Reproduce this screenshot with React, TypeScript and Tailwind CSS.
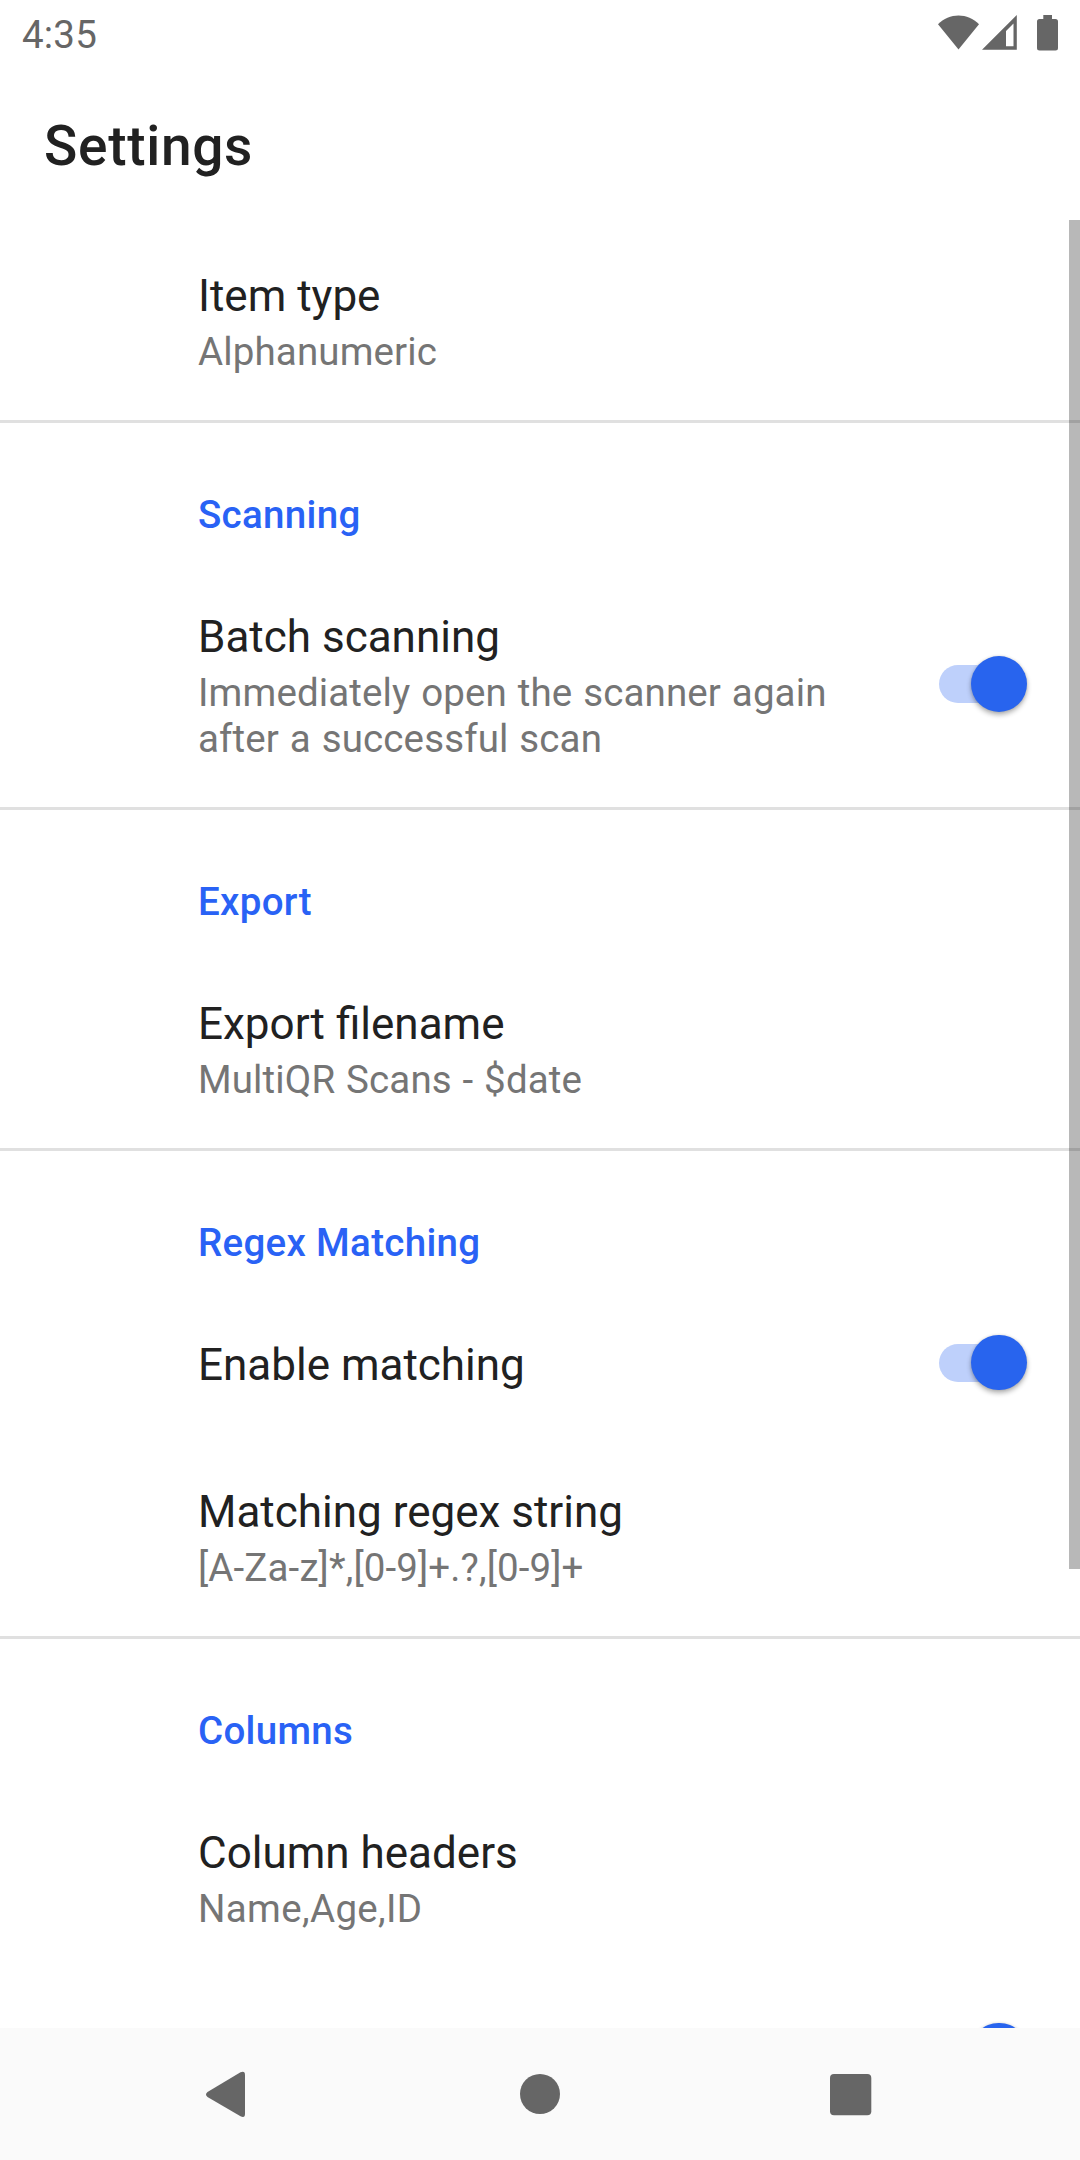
import { ReactNode } from "react";

function Divider() {
  return <div className="h-[3px] shrink-0 bg-[#e0e0e0]" />;
}

function Category({ title }: { title: string }) {
  return (
    <div className="flex h-[138px] shrink-0 items-end pl-[198px] pb-[24px] text-[38.5px] leading-[45px] font-medium tracking-[0.31px] text-[#2962f5]">
      {title}
    </div>
  );
}

function Switch() {
  return (
    <div className="relative mr-[53px] h-[56px] w-[88px] shrink-0">
      <div className="absolute top-[9px] left-0 h-[38px] w-[80px] rounded-full bg-[#bed0fb]" />
      <div className="absolute top-[0.25px] right-[0.25px] size-[55.3px] rounded-full bg-[#2864ee] shadow-[0_3px_5px_rgba(0,0,0,0.3),0_0_3px_rgba(0,0,0,0.12)]" />
    </div>
  );
}

function Preference({ title, summary, height, on }: { title?: string; summary?: ReactNode; height: string; on?: boolean }) {
  return (
    <div className={`flex shrink-0 items-center justify-between pl-[198px] ${height}`}>
      <div className={summary ? "pt-[2px]" : "pt-[5px]"}>
        <div className="text-[44px] leading-[57px] text-[#212121]">{title}</div>
        {summary && (
          <div className="mt-[4px] text-[38.5px] leading-[46px] tracking-[0.13px] text-[#757575] [word-spacing:1.1px]">
            {summary}
          </div>
        )}
      </div>
      {on && <Switch />}
    </div>
  );
}

function StatusIcons() {
  return (
    <svg width="124" height="40" viewBox="936 13 124 40" fill="#666">
      <path d="M938 24.3C949 12.6 968 12.6 979 24.3L958.500 49.500Z" />
      <path fillRule="evenodd" d="M982 49.700L1016.800 15V49.700ZM1006 31V46.300H1013.500V23.500Z" />
      <path d="M1043.300 15H1052V19H1055.500Q1058 19 1058 21.500V48Q1058 50.500 1055.500 50.500H1039.500Q1037 50.500 1037 48V21.500Q1037 19 1039.500 19H1043.300Z" />
    </svg>
  );
}

export default function App() {
  return (
    <div className="relative flex h-[2160px] w-[1080px] flex-col overflow-hidden bg-white font-['Roboto',sans-serif]">
      <header className="flex h-[66px] shrink-0 items-center justify-between pl-[22px] pr-[20px] text-[38.5px] text-[#666]">
        <span className="pt-[3px] tracking-[0.2px]">4:35</span>
        <StatusIcons />
      </header>
      <h1 className="flex h-[154px] shrink-0 items-center pt-[6px] pl-[44px] text-[55px] font-medium tracking-[0.7px] text-[#212121]">
        Settings
      </h1>
      <main className="relative flex min-h-0 grow flex-col overflow-hidden">
        <Preference title="Item type" summary="Alphanumeric" height="h-[200px]" />
        <Divider />
        <Category title="Scanning" />
        <Preference
          title="Batch scanning"
          summary={<>Immediately open the scanner again<br />after a successful scan</>}
          height="h-[246px]"
          on
        />
        <Divider />
        <Category title="Export" />
        <Preference title="Export filename" summary="MultiQR Scans - $date" height="h-[200px]" />
        <Divider />
        <Category title="Regex Matching" />
        <Preference title="Enable matching" height="h-[147px]" on />
        <Preference title="Matching regex string" summary="[A-Za-z]*,[0-9]+.?,[0-9]+" height="h-[200px]" />
        <Divider />
        <Category title="Columns" />
        <Preference
          title="Column headers"
          summary={<span className="tracking-[0.35px]">Name,Age,ID</span>}
          height="h-[200px]"
        />
        <Preference height="h-[147px]" on />
        <div className="absolute top-0 right-0 h-[1349px] w-[11px] bg-black/28" />
      </main>
      <nav className="relative h-[132px] shrink-0 bg-[#fafafa]">
        <svg width="1080" height="132" viewBox="0 2028 1080 132" fill="#666">
          <path d="M207.500 2092L240.500 2072.300Q245 2070.500 245 2075V2114Q245 2118.500 240.500 2116.300L207.500 2097Q204.500 2094.500 207.500 2092Z" />
          <circle cx="540" cy="2094" r="20" />
          <rect x="830" y="2074" width="41.300" height="41.300" rx="4" />
        </svg>
      </nav>
    </div>
  );
}
